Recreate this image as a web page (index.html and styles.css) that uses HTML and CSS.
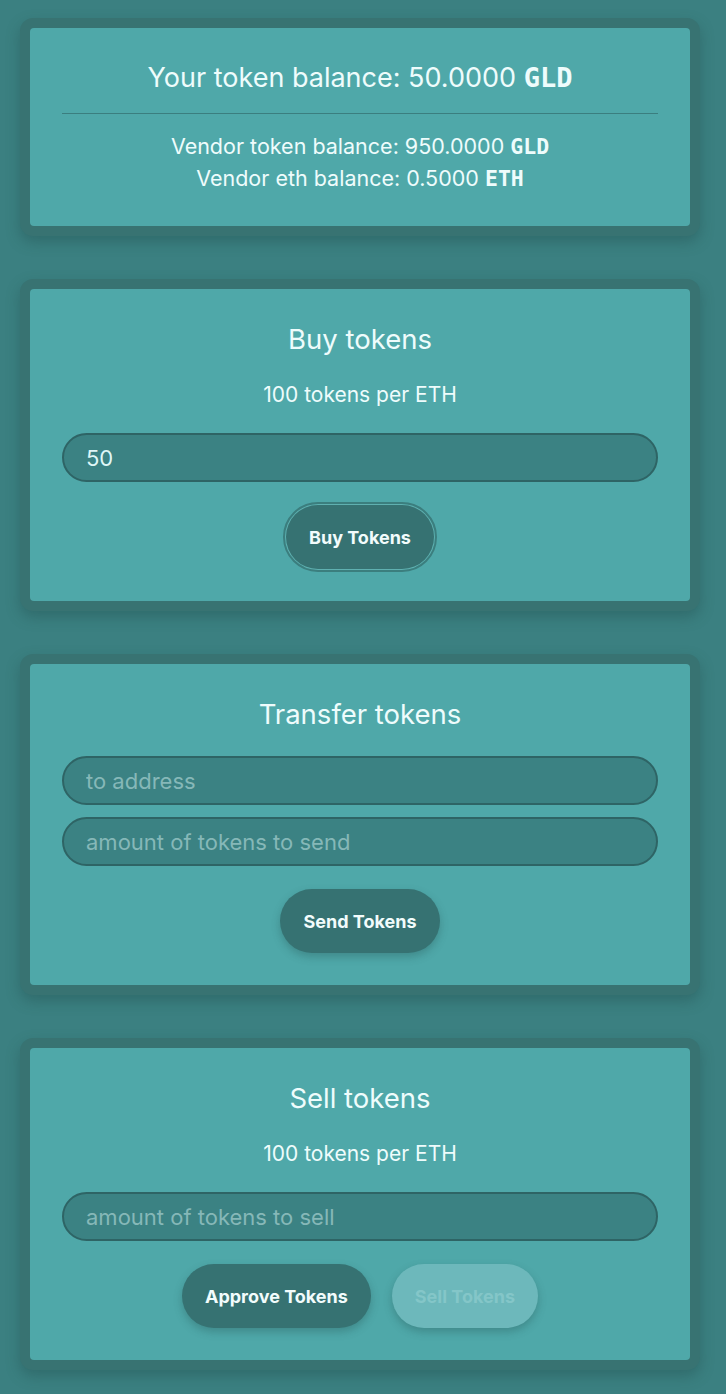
FILE: index.html
```html
<!DOCTYPE html>
<html>
<head>
<meta charset="utf-8">
<link rel="stylesheet" href="styles.css">
</head>
<body>
<main class="page">
  <section class="card">
    <div class="card-inner balance">
      <div class="big-line">Your token balance: 50.0000 <b class="mono">GLD</b></div>
      <hr class="divider">
      <div class="small-line">Vendor token balance: 950.0000 <b class="mono">GLD</b></div>
      <div class="small-line">Vendor eth balance: 0.5000 <b class="mono">ETH</b></div>
    </div>
  </section>

  <section class="card">
    <div class="card-inner">
      <h2 class="title">Buy tokens</h2>
      <p class="rate">100 tokens per ETH</p>
      <input class="field" type="text" value="50">
      <div class="actions">
        <button class="btn btn-focus">Buy Tokens</button>
      </div>
    </div>
  </section>

  <section class="card">
    <div class="card-inner">
      <h2 class="title">Transfer tokens</h2>
      <div class="fields">
        <input class="field" type="text" placeholder="to address">
        <input class="field" type="text" placeholder="amount of tokens to send">
      </div>
      <div class="actions">
        <button class="btn">Send Tokens</button>
      </div>
    </div>
  </section>

  <section class="card">
    <div class="card-inner">
      <h2 class="title">Sell tokens</h2>
      <p class="rate">100 tokens per ETH</p>
      <input class="field" type="text" placeholder="amount of tokens to sell">
      <div class="actions">
        <button class="btn">Approve Tokens</button>
        <button class="btn btn-disabled" disabled>Sell Tokens</button>
      </div>
    </div>
  </section>
</main>
</body>
</html>
```

FILE: styles.css
```css
* { box-sizing: border-box; }
html, body { margin: 0; padding: 0; }
body {
  background: #3b8081;
  font-family: "Inter", "DejaVu Sans", sans-serif;
  color: #eefcfc;
}
.page {
  display: flex;
  flex-direction: column;
  gap: 43px;
  padding: 18px 26px 26px 20px;
}
.card {
  border: 10px solid #387372;
  border-radius: 13px;
  background: #387372;
  box-shadow: 0 6px 14px rgba(30, 70, 70, 0.35);
}
.card-inner {
  background: #4fa8a9;
  border-radius: 4px;
  padding: 32px;
  display: flex;
  flex-direction: column;
  align-items: stretch;
  text-align: center;
}
.big-line {
  font-size: 27px;
  line-height: 35px;
  height: 35px;
}
.small-line {
  font-size: 21.5px;
  line-height: 32px;
  height: 32px;
}
.mono {
  font-family: "DejaVu Sans Mono", "Liberation Mono", monospace;
  font-weight: 700;
  line-height: 1;
}
.divider {
  border: 0;
  border-top: 1px solid #3b7e7f;
  margin: 18px 0 16px;
  height: 0;
}
.title {
  margin: 0;
  font-size: 27.5px;
  font-weight: 400;
  line-height: 36px;
}
.rate {
  margin: 23px 0 23px;
  font-size: 21px;
  line-height: 30px;
}
.fields {
  margin-top: 24px;
  display: flex;
  flex-direction: column;
  gap: 12px;
}
.field {
  width: 100%;
  height: 49px;
  border: 2px solid #2e6465;
  border-radius: 25px;
  background: #3b8283;
  color: #dff6f6;
  font-family: inherit;
  font-size: 22px;
  padding: 0 22px;
  outline: none;
}
.field::placeholder { color: #86b8b8; }
.actions {
  margin-top: 23px;
  display: flex;
  justify-content: center;
  gap: 21px;
}
.btn {
  height: 64px;
  padding: 0 23px;
  border: 0;
  border-radius: 32px;
  background: #367272;
  color: #f2fcfc;
  font-family: inherit;
  font-size: 18px;
  font-weight: 700;
  box-shadow: 0 4px 8px rgba(30, 70, 70, 0.3);
}
.btn-focus {
  outline: 2px solid #3b7e7e;
  outline-offset: 1px;
  box-shadow: 0 0 0 1px #5fb0b0;
}
.btn-disabled {
  background: #6db8bb;
  color: #84c6c8;
}
```
